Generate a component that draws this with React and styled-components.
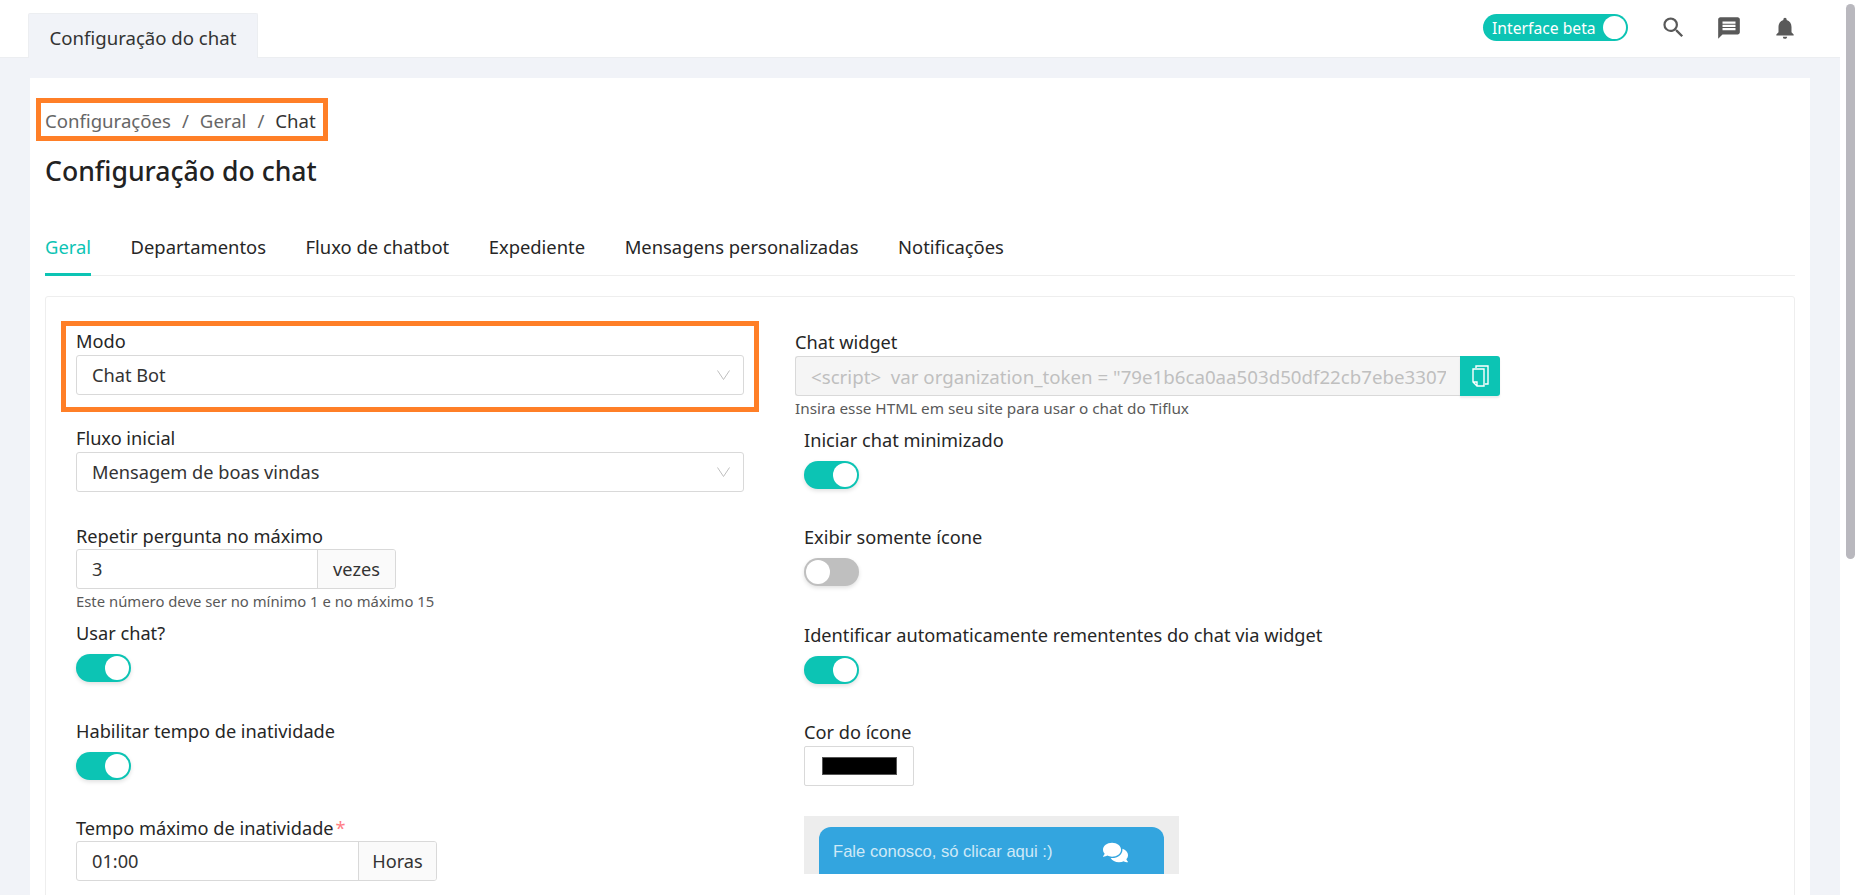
import React from "react";
import styled, { createGlobalStyle } from "styled-components";
import { MdSearch, MdMessage, MdNotifications } from "react-icons/md";
import { FaComments } from "react-icons/fa";

const GlobalStyle = createGlobalStyle`
	html, body {
		margin: 0;
		height: 100%;
		overflow: hidden;
	}
	body {
		font-family: "Noto Sans", "Liberation Sans", sans-serif;
		font-size: 18.2px;
		color: #262626;
		background: #f1f3f8;
	}
	* {
		box-sizing: border-box;
	}
`;

const Arrow = () => (
	<svg width="13" height="10" viewBox="0 0 13 10" fill="none" stroke="#bfbfbf" strokeWidth="1">
		<path d="M0.5 0.5 L6.5 9.5 L12.5 0.5" />
	</svg>
);

const App = () => {
	return (
		<Page>
			<GlobalStyle />
			<Main>
				<Header>
					<HeaderTab>Configuração do chat</HeaderTab>
					<HeaderActions>
						<BetaSwitch>
							Interface beta
							<BetaKnob />
						</BetaSwitch>
						<IconSlot>
							<MdSearch size={27} />
						</IconSlot>
						<IconSlot>
							<MdMessage size={26} />
						</IconSlot>
						<IconSlot>
							<MdNotifications size={26} />
						</IconSlot>
					</HeaderActions>
				</Header>
				<Content>
					<Card>
						<Breadcrumb>
							<Crumb>Configurações</Crumb>
							<Slash>/</Slash>
							<Crumb>Geral</Crumb>
							<Slash>/</Slash>
							<Crumb $current>Chat</Crumb>
						</Breadcrumb>
						<Title>Configuração do chat</Title>
						<Tabs>
							<Tab $active>Geral</Tab>
							<Tab>Departamentos</Tab>
							<Tab>Fluxo de chatbot</Tab>
							<Tab>Expediente</Tab>
							<Tab>Mensagens personalizadas</Tab>
							<Tab>Notificações</Tab>
						</Tabs>
						<FormPanel>
							<LeftColumn>
								<Highlight>
									<Label>Modo</Label>
									<Select>
										Chat Bot
										<Arrow />
									</Select>
								</Highlight>
								<Field $height={98}>
									<Label>Fluxo inicial</Label>
									<Select>
										Mensagem de boas vindas
										<Arrow />
									</Select>
								</Field>
								<Field $height={97}>
									<Label>Repetir pergunta no máximo</Label>
									<InputGroup $width={320}>
										<InputValue>3</InputValue>
										<Addon>vezes</Addon>
									</InputGroup>
									<Hint $size={14.85}>Este número deve ser no mínimo 1 e no máximo 15</Hint>
								</Field>
								<Field $height={98}>
									<Label>Usar chat?</Label>
									<Toggle $on />
								</Field>
								<Field $height={97}>
									<Label>Habilitar tempo de inatividade</Label>
									<Toggle $on />
								</Field>
								<Field>
									<Label>
										Tempo máximo de inatividade<Required>*</Required>
									</Label>
									<InputGroup $width={361}>
										<InputValue>01:00</InputValue>
										<Addon>Horas</Addon>
									</InputGroup>
								</Field>
							</LeftColumn>
							<RightColumn>
								<WidgetField>
									<Label>Chat widget</Label>
									<WidgetRow>
										<WidgetInput>
											<WidgetText>
												{`<script>  var organization_token = "79e1b6ca0aa503d50df22cb7ebe3307`}
											</WidgetText>
										</WidgetInput>
										<CopyButton>
											<svg width="17" height="22" viewBox="0 0 17 22" fill="none" stroke="#fff" strokeWidth="1.4">
												<path d="M4 3V1h12v18h-3" />
												<path d="M1 4h11v17H5l-4-4zM1 17h4v4" />
											</svg>
										</CopyButton>
									</WidgetRow>
									<Hint $size={15.3}>Insira esse HTML em seu site para usar o chat do Tiflux</Hint>
								</WidgetField>
								<SideField $height={97}>
									<Label>Iniciar chat minimizado</Label>
									<Toggle $on />
								</SideField>
								<SideField $height={98}>
									<Label>Exibir somente ícone</Label>
									<Toggle />
								</SideField>
								<SideField $height={97}>
									<Label>Identificar automaticamente remententes do chat via widget</Label>
									<Toggle $on />
								</SideField>
								<SideField $height={96}>
									<Label>Cor do ícone</Label>
									<ColorPicker>
										<ColorSwatch />
									</ColorPicker>
								</SideField>
								<WidgetPreview>
									<PreviewBubble>
										Fale conosco, só clicar aqui :)
										<FaComments size={25} />
									</PreviewBubble>
								</WidgetPreview>
							</RightColumn>
						</FormPanel>
					</Card>
				</Content>
			</Main>
			<Scrollbar>
				<ScrollThumb />
			</Scrollbar>
		</Page>
	);
};

const Page = styled.div`
	height: 895px;
	display: flex;
	overflow: hidden;
`;

const Main = styled.div`
	flex: 1;
	min-width: 0;
	display: flex;
	flex-direction: column;
`;

const Header = styled.header`
	height: 58px;
	flex: none;
	background: #fff;
	border-bottom: 1px solid #eceef1;
	display: flex;
	justify-content: space-between;
	align-items: flex-end;
	padding-left: 28px;
	padding-right: 27px;
`;

const HeaderTab = styled.div`
	width: 230px;
	height: 45px;
	margin-bottom: -1px;
	padding-top: 2px;
	background: #f1f3f8;
	border: 1px solid #eceef1;
	border-bottom: none;
	border-radius: 2px 2px 0 0;
	display: flex;
	align-items: center;
	justify-content: center;
	font-size: 18.6px;
	color: #333;
	white-space: nowrap;
`;

const HeaderActions = styled.div`
	align-self: flex-start;
	margin-top: 14px;
	display: flex;
	align-items: center;
`;

const BetaSwitch = styled.div`
	width: 145px;
	height: 27px;
	border-radius: 14px;
	background: #0cc4b4;
	color: #fff;
	font-size: 15.7px;
	display: flex;
	align-items: center;
	padding-left: 9px;
	position: relative;
	margin-right: 17px;
	white-space: nowrap;
`;

const BetaKnob = styled.span`
	position: absolute;
	right: 2px;
	top: 2px;
	width: 23px;
	height: 23px;
	border-radius: 50%;
	background: #fff;
`;

const IconSlot = styled.div`
	width: 56px;
	height: 27px;
	display: flex;
	align-items: center;
	justify-content: center;
	color: #595959;
`;

const Content = styled.main`
	flex: 1;
	min-height: 0;
	padding: 20px 30px 0;
`;

const Card = styled.section`
	background: #fff;
	height: 100%;
	padding: 20px 15px 0;
`;

const Breadcrumb = styled.nav`
	width: 292px;
	height: 43px;
	margin-left: -9px;
	border: 5px solid #ff7f27;
	padding: 1px 0 0 4px;
	display: flex;
	align-items: center;
	font-size: 18.6px;
	white-space: nowrap;
`;

const Crumb = styled.span`
	color: ${(p) => (p.$current ? "#333" : "#666")};
`;

const Slash = styled.span`
	color: #666;
	margin: 0 11px;
`;

const Title = styled.h1`
	margin: 12px 0 0;
	font-size: 26.6px;
	line-height: 36px;
	font-weight: 500;
	color: #222;
`;

const Tabs = styled.div`
	margin-top: 45px;
	height: 42px;
	display: flex;
	gap: 39.5px;
	border-bottom: 1px solid #eeeeee;
`;

const Tab = styled.div`
	height: 42px;
	font-size: 18.4px;
	line-height: 26px;
	color: ${(p) => (p.$active ? "#0cc4b4" : "#262626")};
	border-bottom: 3px solid ${(p) => (p.$active ? "#0cc4b4" : "transparent")};
	white-space: nowrap;
`;

const FormPanel = styled.div`
	margin-top: 20px;
	height: 700px;
	border: 1px solid #eeeeee;
	border-radius: 3px;
	padding: 24px 15px 0;
	display: grid;
	grid-template-columns: 698px 1fr;
	column-gap: 36px;
`;

const LeftColumn = styled.div`
	display: flex;
	flex-direction: column;
`;

const RightColumn = styled.div`
	display: flex;
	flex-direction: column;
	padding-top: 9px;
`;

const Highlight = styled.div`
	height: 91px;
	flex: none;
	border: 5px solid #ff7f27;
	padding: 3px 10px 0;
	margin-bottom: 14px;
`;

const Field = styled.div`
	flex: none;
	padding: 0 15px;
	height: ${(p) => (p.$height ? `${p.$height}px` : "auto")};
`;

const Label = styled.div`
	line-height: 24px;
	color: #262626;
	white-space: nowrap;
`;

const Required = styled.span`
	color: #ff7d85;
	margin-left: 2px;
`;

const Select = styled.div`
	height: 40px;
	margin-top: 2px;
	border: 1px solid #d9d9d9;
	border-radius: 3px;
	display: flex;
	align-items: center;
	justify-content: space-between;
	padding: 0 13px 0 15px;
	color: #333;
`;

const InputGroup = styled.div`
	width: ${(p) => p.$width}px;
	height: 40px;
	margin-top: 1px;
	display: flex;
	border: 1px solid #d9d9d9;
	border-radius: 3px;
	overflow: hidden;
`;

const InputValue = styled.div`
	flex: 1;
	display: flex;
	align-items: center;
	padding-left: 15px;
	color: #333;
`;

const Addon = styled.div`
	width: 78px;
	background: #fafafa;
	border-left: 1px solid #d9d9d9;
	display: flex;
	align-items: center;
	justify-content: center;
	color: #333;
`;

const Hint = styled.div`
	margin-top: 2px;
	font-size: ${(p) => p.$size}px;
	line-height: 20px;
	color: #595959;
	white-space: nowrap;
`;

const Toggle = styled.div`
	margin-top: 9px;
	width: 55px;
	height: 28px;
	border-radius: 14px;
	background: ${(p) => (p.$on ? "#0cc4b4" : "#bfbfbf")};
	position: relative;
	box-shadow: 0 2px 4px rgba(0, 0, 0, 0.12);

	&::after {
		content: "";
		position: absolute;
		top: 2px;
		${(p) => (p.$on ? "right: 2px;" : "left: 2px;")}
		width: 24px;
		height: 24px;
		border-radius: 50%;
		background: #fff;
	}
`;

const WidgetField = styled.div`
	height: 98px;
	flex: none;
`;

const WidgetRow = styled.div`
	display: flex;
	height: 40px;
	width: 705px;
	margin-top: 2px;
`;

const WidgetInput = styled.div`
	flex: 1;
	min-width: 0;
	background: #f5f5f5;
	border: 1px solid #d9d9d9;
	border-right: none;
	border-radius: 3px 0 0 3px;
	padding: 0 14px 0 15px;
	display: flex;
	align-items: center;
`;

const WidgetText = styled.span`
	flex: 1;
	min-width: 0;
	overflow: hidden;
	white-space: pre;
	color: #bfbfbf;
	font-size: 18.7px;
`;

const CopyButton = styled.div`
	width: 40px;
	flex: none;
	background: #0cc4b4;
	border-radius: 0 3px 3px 0;
	display: flex;
	align-items: center;
	justify-content: center;
	box-shadow: 0 2px 2px rgba(0, 0, 0, 0.08);
`;

const SideField = styled.div`
	flex: none;
	padding-left: 9px;
	height: ${(p) => p.$height}px;
`;

const ColorPicker = styled.div`
	width: 110px;
	height: 40px;
	margin-top: 2px;
	border: 1px solid #d9d9d9;
	border-radius: 2px;
	display: flex;
	align-items: center;
	justify-content: center;
`;

const ColorSwatch = styled.div`
	width: 75px;
	height: 18px;
	background: #000;
	border: 1px solid #555;
`;

const WidgetPreview = styled.div`
	width: 375px;
	height: 58px;
	margin-left: 9px;
	background: #ededed;
	padding: 11px 15px 0;
	overflow: hidden;
`;

const PreviewBubble = styled.div`
	height: 90px;
	background: #33a5df;
	border-radius: 12px 12px 0 0;
	color: #cfe9f7;
	font-family: "Liberation Sans", sans-serif;
	font-size: 16.6px;
	line-height: 20px;
	display: flex;
	justify-content: space-between;
	align-items: flex-start;
	padding: 15px 36px 0 14px;

	svg {
		color: #fff;
		margin-top: -2px;
	}
`;

const Scrollbar = styled.div`
	width: 19px;
	flex: none;
	background: #fff;
	padding: 4px 4px 0 6px;
`;

const ScrollThumb = styled.div`
	height: 555px;
	background: #b9b8be;
	border-radius: 5px;
`;

export default App;
